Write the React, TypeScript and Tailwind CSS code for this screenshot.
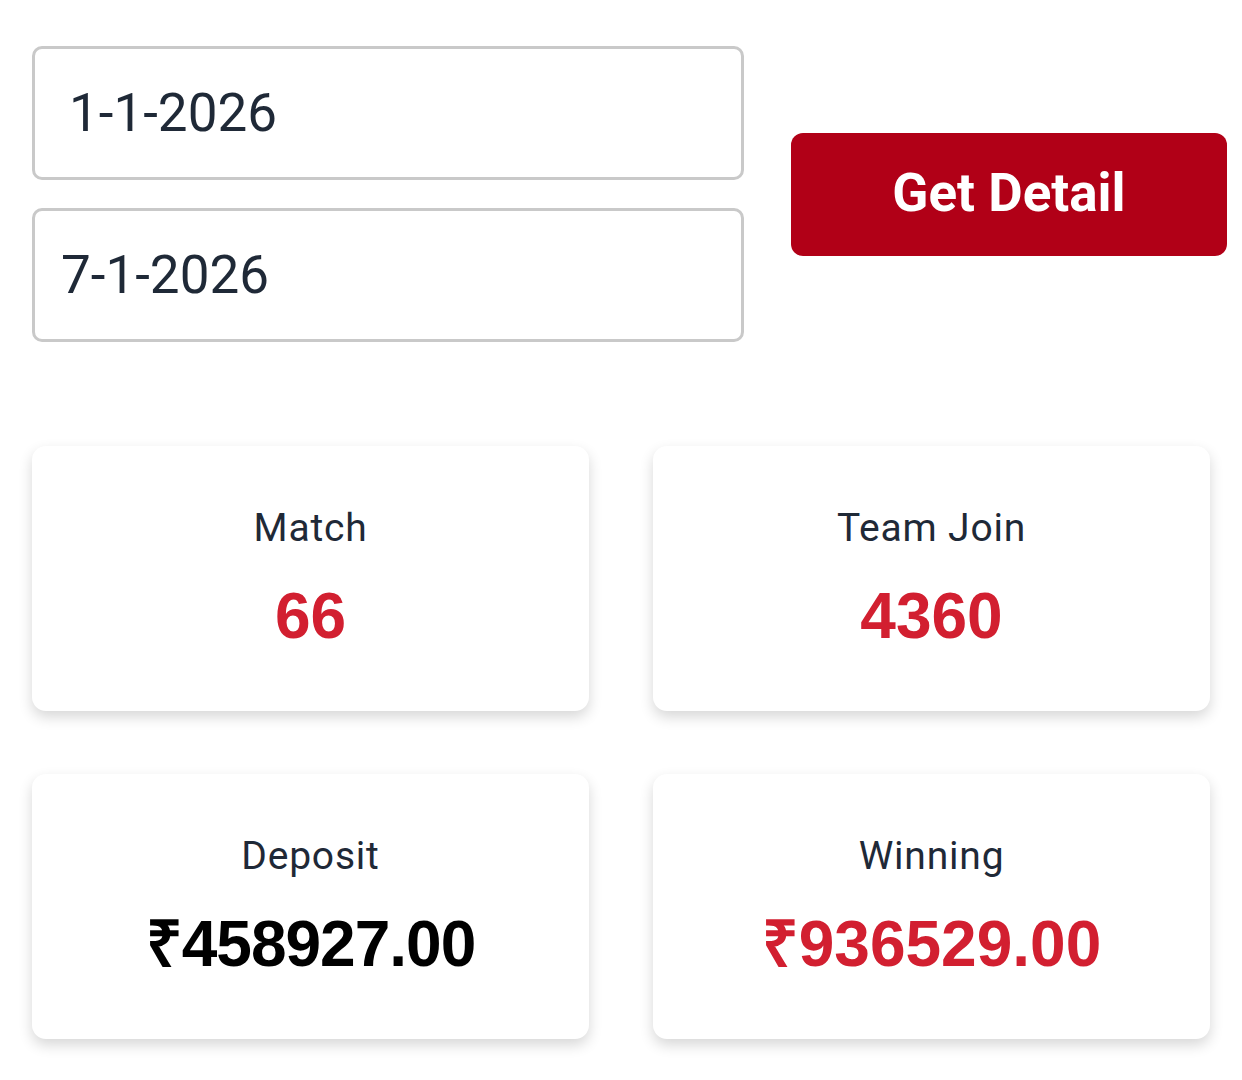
import React from "react";

function Card({ label, value, valueClass }: { label: string; value: string; valueClass: string }) {
  return (
    <div className="flex h-[265px] flex-col items-center justify-center rounded-[14px] bg-white shadow-[0_6px_14px_rgba(0,0,0,0.16)]">
      <div className="text-[39px] leading-none tracking-[0.8px] text-[#1f2937] [font-family:Roboto,sans-serif]">{label}</div>
      <div className={"mt-[36px] text-[64px] font-bold leading-none [font-family:Liberation_Sans,Arial,sans-serif] " + valueClass}>{value}</div>
    </div>
  );
}

export default function App() {
  return (
    <div className="min-h-[1080px] w-[1242px] bg-white [font-family:Roboto,sans-serif]">
      <div className="flex items-center pt-[46px] pl-[32px] pr-[15px]">
        <div className="flex w-[712px] flex-col gap-[28px]">
          <div className="flex h-[134px] items-center rounded-[10px] border-[3px] border-[#c9c9c9] pl-[34px] pt-[2px] text-[53px] text-[#1f2937]">1-1-2026</div>
          <div className="flex h-[134px] items-center rounded-[10px] border-[3px] border-[#c9c9c9] pl-[26px] pt-[2px] text-[53px] text-[#1f2937]">7-1-2026</div>
        </div>
        <button className="ml-[47px] flex h-[123px] flex-1 items-center justify-center rounded-[12px] bg-[#b10017] text-[53px] font-bold text-white">Get Detail</button>
      </div>
      <div className="mt-[104px] grid grid-cols-2 gap-x-[64px] gap-y-[63px] px-[32px]">
        <Card label="Match" value="66" valueClass="text-[#d21f30]" />
        <Card label="Team Join" value="4360" valueClass="text-[#d21f30]" />
        <Card label="Deposit" value="₹458927.00" valueClass="text-black tracking-[-1px]" />
        <Card label="Winning" value="₹936529.00" valueClass="text-[#d21f30]" />
      </div>
    </div>
  );
}
